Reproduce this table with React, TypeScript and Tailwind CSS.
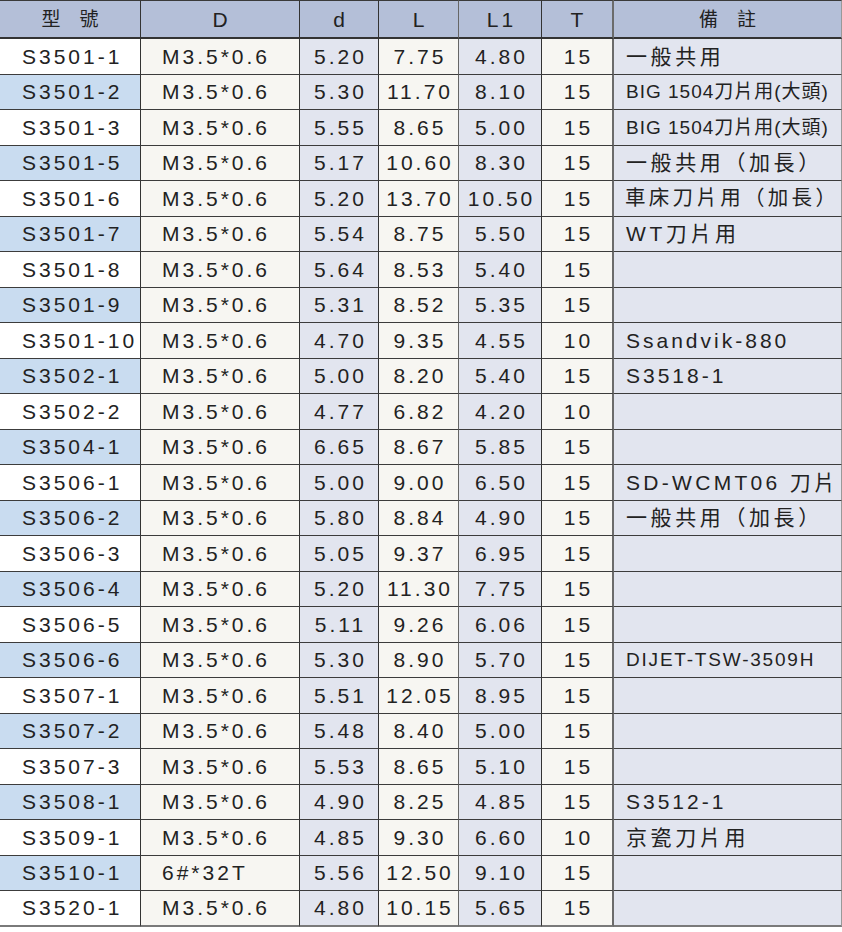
type Row = {
  no: string;
  D: string;
  d: string;
  L: string;
  L1: string;
  T: string;
  note?: string;
  noteCls?: string;
};

const big = 'text-[19px] tracking-[1px] pl-[12px]';
const cjk = 'tracking-[3.6px] pl-[12px]';

const rows: Row[] = [
  { no: 'S3501-1', D: 'M3.5*0.6', d: '5.20', L: '7.75', L1: '4.80', T: '15', note: '一般共用', noteCls: cjk },
  { no: 'S3501-2', D: 'M3.5*0.6', d: '5.30', L: '11.70', L1: '8.10', T: '15', note: 'BIG 1504刀片用(大頭)', noteCls: big },
  { no: 'S3501-3', D: 'M3.5*0.6', d: '5.55', L: '8.65', L1: '5.00', T: '15', note: 'BIG 1504刀片用(大頭)', noteCls: big },
  { no: 'S3501-5', D: 'M3.5*0.6', d: '5.17', L: '10.60', L1: '8.30', T: '15', note: '一般共用（加長）', noteCls: cjk },
  { no: 'S3501-6', D: 'M3.5*0.6', d: '5.20', L: '13.70', L1: '10.50', T: '15', note: '車床刀片用（加長）', noteCls: 'text-[20.5px] tracking-[3.3px] pl-[11px]' },
  { no: 'S3501-7', D: 'M3.5*0.6', d: '5.54', L: '8.75', L1: '5.50', T: '15', note: 'WT刀片用', noteCls: cjk },
  { no: 'S3501-8', D: 'M3.5*0.6', d: '5.64', L: '8.53', L1: '5.40', T: '15' },
  { no: 'S3501-9', D: 'M3.5*0.6', d: '5.31', L: '8.52', L1: '5.35', T: '15' },
  { no: 'S3501-10', D: 'M3.5*0.6', d: '4.70', L: '9.35', L1: '4.55', T: '10', note: 'Ssandvik-880' },
  { no: 'S3502-1', D: 'M3.5*0.6', d: '5.00', L: '8.20', L1: '5.40', T: '15', note: 'S3518-1' },
  { no: 'S3502-2', D: 'M3.5*0.6', d: '4.77', L: '6.82', L1: '4.20', T: '10' },
  { no: 'S3504-1', D: 'M3.5*0.6', d: '6.65', L: '8.67', L1: '5.85', T: '15' },
  { no: 'S3506-1', D: 'M3.5*0.6', d: '5.00', L: '9.00', L1: '6.50', T: '15', note: 'SD-WCMT06 刀片', noteCls: 'tracking-[3.3px] pl-[12px]' },
  { no: 'S3506-2', D: 'M3.5*0.6', d: '5.80', L: '8.84', L1: '4.90', T: '15', note: '一般共用（加長）', noteCls: cjk },
  { no: 'S3506-3', D: 'M3.5*0.6', d: '5.05', L: '9.37', L1: '6.95', T: '15' },
  { no: 'S3506-4', D: 'M3.5*0.6', d: '5.20', L: '11.30', L1: '7.75', T: '15' },
  { no: 'S3506-5', D: 'M3.5*0.6', d: '5.11', L: '9.26', L1: '6.06', T: '15' },
  { no: 'S3506-6', D: 'M3.5*0.6', d: '5.30', L: '8.90', L1: '5.70', T: '15', note: 'DIJET-TSW-3509H', noteCls: 'text-[19px] tracking-[1.8px] pl-[12px]' },
  { no: 'S3507-1', D: 'M3.5*0.6', d: '5.51', L: '12.05', L1: '8.95', T: '15' },
  { no: 'S3507-2', D: 'M3.5*0.6', d: '5.48', L: '8.40', L1: '5.00', T: '15' },
  { no: 'S3507-3', D: 'M3.5*0.6', d: '5.53', L: '8.65', L1: '5.10', T: '15' },
  { no: 'S3508-1', D: 'M3.5*0.6', d: '4.90', L: '8.25', L1: '4.85', T: '15', note: 'S3512-1' },
  { no: 'S3509-1', D: 'M3.5*0.6', d: '4.85', L: '9.30', L1: '6.60', T: '10', note: '京瓷刀片用', noteCls: cjk },
  { no: 'S3510-1', D: '6#*32T', d: '5.56', L: '12.50', L1: '9.10', T: '15' },
  { no: 'S3520-1', D: 'M3.5*0.6', d: '4.80', L: '10.15', L1: '5.65', T: '15' },
];

const head = 'flex items-center justify-center bg-[#b4bfd8] border-t border-t-[#3a3a3a] border-b-2 border-b-[#333]';
const cell = 'flex items-center border-b border-b-[#3c3c3c]';
const num = 'tracking-[3px]';

export default function App() {
  return (
    <div className="w-[842px] bg-white pb-[6px] text-[#222] font-['Liberation_Sans','Noto_Sans_CJK_TC',sans-serif]">
      <div className="grid grid-cols-[141px_159px_79px_80px_83px_72px_228px] grid-rows-[39px] auto-rows-[35.5px] text-[21px] leading-none">
        {/* Header */}
        <div className={`${head} border-r border-r-[#333] text-[19px]`}>型　號</div>
        <div className={`${head} border-r border-r-[#333]`}>D</div>
        <div className={`${head} border-r border-r-[#333]`}>d</div>
        <div className={`${head} border-r border-r-[#666]`}>L</div>
        <div className={`${head} border-r border-r-[#333] tracking-[3px] pl-[3px]`}>L1</div>
        <div className={`${head} border-r-2 border-r-[#6b6b6b]`}>T</div>
        <div className={`${head} border-r border-r-[#999] text-[19px]`}>備　註</div>

        {rows.map((r, i) => {
          const bb = i === rows.length - 1 ? 'border-b-2 border-b-[#7a7a7a]' : '';
          return [
            <div
              key={`${r.no}-a`}
              className={`${cell} ${bb} ${num} pl-[22px] border-r border-r-[#333] whitespace-nowrap ${i % 2 === 1 ? 'bg-[#c9dcf0]' : 'bg-white'}`}
            >
              {r.no}
            </div>,
            <div key={`${r.no}-b`} className={`${cell} ${bb} ${num} pl-[21px] border-r border-r-[#333] bg-[#f7f6f2]`}>
              {r.D}
            </div>,
            <div key={`${r.no}-c`} className={`${cell} ${bb} ${num} justify-center pl-[3px] border-r border-r-[#333] bg-[#e2e5ef]`}>
              {r.d}
            </div>,
            <div key={`${r.no}-d`} className={`${cell} ${bb} ${num} justify-center pl-[3px] border-r border-r-[#666] bg-[#f7f6f2]`}>
              {r.L}
            </div>,
            <div key={`${r.no}-e`} className={`${cell} ${bb} ${num} justify-center pl-[3px] border-r border-r-[#333] bg-[#e2e5ef]`}>
              {r.L1}
            </div>,
            <div key={`${r.no}-f`} className={`${cell} ${bb} ${num} justify-center pl-[3px] border-r-2 border-r-[#6b6b6b] bg-[#f7f6f2]`}>
              {r.T}
            </div>,
            <div
              key={`${r.no}-g`}
              className={`${cell} ${bb} border-r border-r-[#999] bg-[#e2e5ef] whitespace-nowrap overflow-hidden ${r.noteCls ?? `${num} pl-[12px]`}`}
            >
              {r.note ?? ''}
            </div>,
          ];
        })}
      </div>
    </div>
  );
}
